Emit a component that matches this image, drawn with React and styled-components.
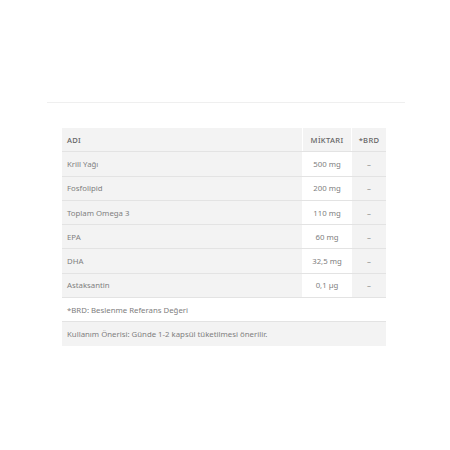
import React from "react";
import styled, { createGlobalStyle } from "styled-components";

const Global = createGlobalStyle`
  body {
    margin: 0;
    background: #fff;
    font-family: "Noto Sans", "Open Sans", sans-serif;
  }
`;

const rows = [
  ["Krill Yağı", "500 mg"],
  ["Fosfolipid", "200 mg"],
  ["Toplam Omega 3", "110 mg"],
  ["EPA", "60 mg"],
  ["DHA", "32,5 mg"],
  ["Astaksantin", "0,1 µg"],
];

const App = () => {
  return (
    <Page>
      <Global />
      <Divider />
      <Table>
        <Row>
          <Cell $head>ADI</Cell>
          <Cell $head $center>MİKTARI</Cell>
          <Cell $head $center>*BRD</Cell>
        </Row>
        {rows.map(([name, amount]) => (
          <Row key={name}>
            <Cell>{name}</Cell>
            <Cell $center $white>{amount}</Cell>
            <Cell $center>–</Cell>
          </Row>
        ))}
        <Note $white>*BRD: Beslenme Referans Değeri</Note>
        <Note>Kullanım Önerisi: Günde 1-2 kapsül tüketilmesi önerilir.</Note>
      </Table>
    </Page>
  );
};

export default App;

const Page = styled.div`
  padding: 102px 45px 0 47px;
`;

const Divider = styled.div`
  height: 1px;
  background: #efefef;
  margin-bottom: 25px;
`;

const Table = styled.div`
  margin-left: 15px;
  width: 324px;
`;

const Row = styled.div`
  display: grid;
  grid-template-columns: 240px 49px 35px;
  height: 23.3px;
  border-bottom: 1px solid #e3e3e3;
`;

const Cell = styled.div`
  display: flex;
  align-items: center;
  justify-content: ${(p) => (p.$center ? "center" : "flex-start")};
  padding: 0 ${(p) => (p.$center ? "0" : "5px")};
  background: ${(p) => (p.$white ? "#fff" : "#f3f3f3")};
  border-left: ${(p) => (p.$center ? "1px solid #fff" : "none")};
  font-size: ${(p) => (p.$head ? "7.6px" : "7.8px")};
  font-weight: ${(p) => (p.$head ? 500 : 400)};
  color: ${(p) => (p.$head ? "#666" : "#808080")};
  letter-spacing: ${(p) => (p.$head ? "0.3px" : "0")};
  white-space: nowrap;
`;

const Note = styled.div`
  display: flex;
  align-items: center;
  height: 23.3px;
  padding: 0 5px;
  background: ${(p) => (p.$white ? "#fff" : "#f3f3f3")};
  border-bottom: ${(p) => (p.$white ? "1px solid #e3e3e3" : "none")};
  font-size: 7.8px;
  color: #808080;
  white-space: nowrap;
`;
